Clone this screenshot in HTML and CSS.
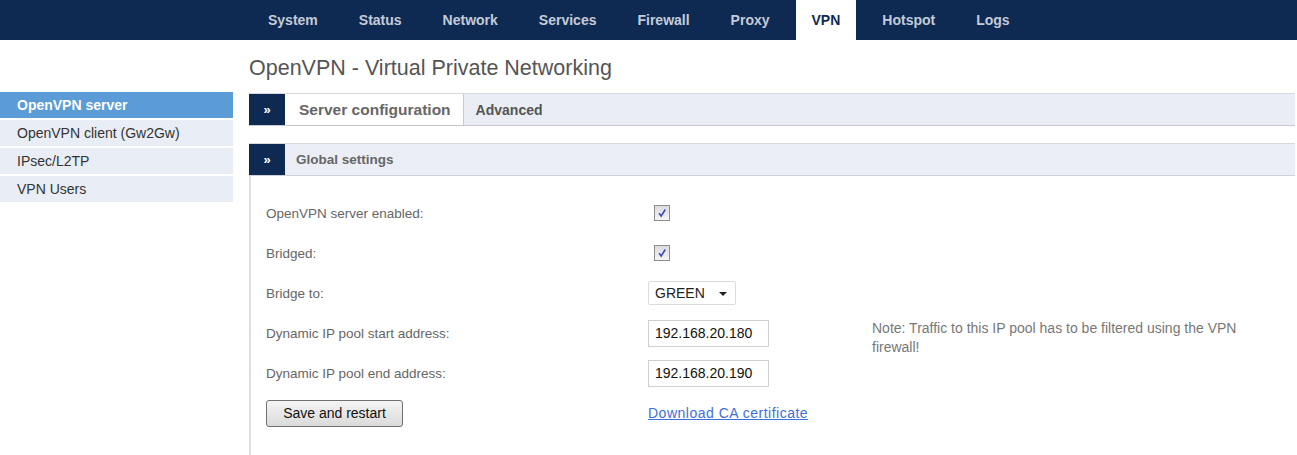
FILE: index.html
```html
<!DOCTYPE html>
<html lang="en">

<head>
    <meta charset="UTF-8">
    <title>OpenVPN - Virtual Private Networking</title>
    <link rel="stylesheet" href="styles.css">
</head>

<body>
    <div id="topbar">
        <ul id="mainnav">
            <li>System</li>
            <li>Status</li>
            <li>Network</li>
            <li>Services</li>
            <li>Firewall</li>
            <li>Proxy</li>
            <li class="active">VPN</li>
            <li>Hotspot</li>
            <li>Logs</li>
        </ul>
    </div>
    <div id="page">
        <ul id="sidenav">
            <li class="active">OpenVPN server</li>
            <li>OpenVPN client (Gw2Gw)</li>
            <li>IPsec/L2TP</li>
            <li>VPN Users</li>
        </ul>
        <div id="content">
            <h1 class="title">OpenVPN - Virtual Private Networking</h1>
            <div class="tabs">
                <span class="marker">&raquo;</span>
                <span class="tab active">Server configuration</span>
                <span class="tab">Advanced</span>
            </div>
            <div class="section">
                <div class="section_head">
                    <span class="marker">&raquo;</span>
                    <span class="section_title">Global settings</span>
                </div>
                <div class="section_body">
                    <form class="fields">
                        <label>OpenVPN server enabled:</label>
                        <div class="control"><span class="check"><svg width="10" height="10" viewBox="0 0 10 10"><path d="M2 5.2 L4.2 8 L8.3 1.5" fill="none" stroke="#3b4fb5" stroke-width="1.6"/></svg></span></div>
                        <div></div>

                        <label>Bridged:</label>
                        <div class="control"><span class="check"><svg width="10" height="10" viewBox="0 0 10 10"><path d="M2 5.2 L4.2 8 L8.3 1.5" fill="none" stroke="#3b4fb5" stroke-width="1.6"/></svg></span></div>
                        <div></div>

                        <label>Bridge to:</label>
                        <div class="control"><span class="select">GREEN</span></div>
                        <div></div>

                        <label>Dynamic IP pool start address:</label>
                        <div class="control"><input type="text" class="text" value="192.168.20.180"></div>
                        <p class="note">Note: Traffic to this IP pool has to be filtered using the VPN firewall!</p>

                        <label>Dynamic IP pool end address:</label>
                        <div class="control"><input type="text" class="text" value="192.168.20.190"></div>
                        <div></div>

                        <div><button type="button" class="btn">Save and restart</button></div>
                        <div class="control"><a href="#" class="link">Download CA certificate</a></div>
                        <div></div>
                    </form>
                </div>
            </div>
        </div>
    </div>
</body>

</html>
```

FILE: styles.css
```css
* {
    margin: 0;
    padding: 0;
    list-style: none
}

body {
    font-family: "Liberation Sans", Arial, sans-serif;
    background: #fff;
    color: #555;
}

#topbar {
    height: 40px;
    background: #0f2a52;
}

#mainnav {
    display: flex;
    gap: 11px;
    height: 100%;
    padding-left: 253px;
}

#mainnav li {
    display: flex;
    align-items: center;
    padding: 0 15px;
    font-size: 14px;
    font-weight: bold;
    color: #c3cbd8;
}

#mainnav li.active {
    background: #fff;
    padding: 0 16px;
    color: #0f2a52;
}

#page {
    display: flex;
}

#sidenav {
    width: 233px;
    margin-top: 52px;
    display: flex;
    flex-direction: column;
    gap: 2px;
}

#sidenav li {
    height: 26px;
    line-height: 26px;
    padding-left: 17px;
    background: #e9edf5;
    font-size: 14px;
    color: #333;
}

#sidenav li.active {
    background: #5b9bd6;
    color: #fff;
    font-weight: bold;
}

#content {
    flex: 1;
    margin: 0 2px 0 16px;
}

.title {
    margin: 16px 0 13px;
    font-size: 21.5px;
    line-height: 24px;
    font-weight: normal;
    color: #555;
}

.tabs {
    display: flex;
    height: 33px;
    box-sizing: border-box;
    background: #eaedf6;
    border-top: 1px solid #d6d8de;
    border-bottom: 1px solid #c5c8cf;
}

.marker {
    width: 36px;
    display: flex;
    align-items: center;
    justify-content: center;
    background: #0f2a52;
    color: #fff;
    font-size: 13px;
    font-weight: bold;
}

.tab {
    display: flex;
    align-items: center;
    padding: 0 12px;
    font-size: 14px;
    font-weight: bold;
    color: #555;
}

.tab.active {
    background: #fff;
    padding: 0 12px 0 14px;
    font-size: 15.5px;
    color: #666;
    border-right: 1px solid #c8cbd2;
}

.section {
    margin-top: 17px;
}

.section_head {
    display: flex;
    height: 33px;
    box-sizing: border-box;
    background: #eceef6;
    border-top: 1px solid #d6d8de;
    border-bottom: 1px solid #cfd1d8;
}

.section_title {
    display: flex;
    align-items: center;
    padding-left: 11px;
    font-size: 13.5px;
    font-weight: bold;
    color: #666;
}

.section_body {
    border-left: 2px solid #dedede;
    padding: 17px 0 40px 15px;
}

.fields {
    display: grid;
    grid-template-columns: 382px 224px 1fr;
    grid-auto-rows: 40px;
    align-items: center;
}

.fields label {
    font-size: 13.5px;
    color: #666;
}

.check {
    display: flex;
    align-items: center;
    justify-content: center;
    width: 14px;
    height: 14px;
    margin-left: 6px;
    border: 1px solid #8e8e8e;
    background: linear-gradient(#dcdcdc, #f4f4f4);
}

.select {
    position: relative;
    display: block;
    width: 88px;
    height: 24px;
    line-height: 22px;
    box-sizing: border-box;
    padding-left: 6px;
    border: 1px solid #dcdcdc;
    border-radius: 2px;
    font-size: 14px;
    color: #222;
}

.select:after {
    content: "";
    position: absolute;
    right: 8px;
    top: 10px;
    border-left: 4px solid transparent;
    border-right: 4px solid transparent;
    border-top: 4px solid #222;
}

.text {
    width: 121px;
    height: 27px;
    box-sizing: border-box;
    padding: 0 6px;
    border: 1px solid #cfcfcf;
    font-family: "Liberation Sans", Arial, sans-serif;
    font-size: 14px;
    color: #111;
    outline: none;
}

.note {
    align-self: start;
    margin-top: 6px;
    width: 395px;
    font-size: 14px;
    line-height: 19px;
    color: #777;
}

.btn {
    width: 137px;
    height: 27px;
    border: 1px solid #707070;
    border-radius: 3px;
    background: linear-gradient(#f4f4f4, #dadada);
    font-family: "Liberation Sans", Arial, sans-serif;
    font-size: 14px;
    color: #111;
}

.link {
    font-size: 14px;
    letter-spacing: 0.5px;
    color: #3f6fd8;
}
```
